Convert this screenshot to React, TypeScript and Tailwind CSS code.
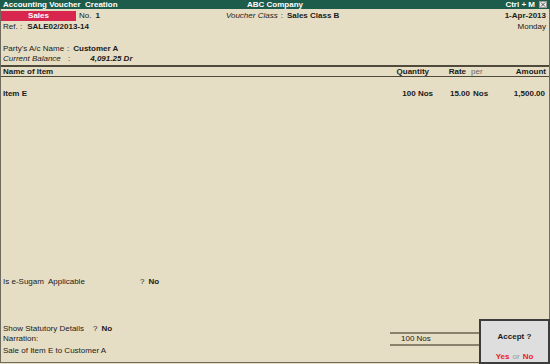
export default function App() {
  return (
    <div
      className="relative w-[550px] h-[364px] bg-[#e6dec4] text-[#1a1a1a] text-[8px] leading-[10px] flex flex-col overflow-hidden"
      style={{ fontFamily: '"Liberation Sans", Arial, sans-serif' }}
    >
      {/* Title bar */}
      <div className="h-[9px] bg-[#1d5b4b] text-white font-bold leading-[9px] grid grid-cols-3 px-[3px]">
        <span>Accounting Voucher&nbsp; Creation</span>
        <span className="text-center">ABC Company</span>
        <span className="flex justify-end items-center gap-[4px]">
          Ctrl + M
          <span className="w-[8px] h-[7px] bg-[#e8e8e8] border border-[#9a9a9a] flex items-center justify-center">
            <svg width="6" height="5" viewBox="0 0 6 5">
              <path d="M1 0.5 L5 4.5 M5 0.5 L1 4.5" stroke="#555" strokeWidth="1" />
            </svg>
          </span>
        </span>
      </div>

      {/* Body */}
      <div className="flex-1 flex flex-col border-l border-r border-b border-[#6e6a5c] mb-[1px]">
        {/* Voucher header */}
        <div className="mt-[2px] h-[10px] flex items-center">
          <div className="w-[75px] h-[10px] bg-[#d9264f] text-white font-bold text-center">Sales</div>
          <span className="ml-[3px]">No.</span>
          <span className="ml-[4px] font-bold">1</span>
          <span className="ml-[126px] italic">Voucher Class</span>
          <span className="ml-[3px]">:</span>
          <span className="ml-[4px] font-bold">Sales Class B</span>
          <span className="ml-auto mr-[3px] font-bold">1-Apr-2013</span>
        </div>
        <div className="mt-[1px] h-[10px] flex items-center px-[2px]">
          <span>Ref. :</span>
          <span className="ml-[5px] font-bold">SALE02/2013-14</span>
          <span className="ml-auto mr-[1px]">Monday</span>
        </div>

        {/* Party */}
        <div className="mt-[12px] h-[10px] flex items-center px-[2px]">
          <span className="w-[64px]">Party's A/c Name</span>
          <span>:</span>
          <span className="ml-[4px] font-bold">Customer A</span>
        </div>
        <div className="h-[10px] flex items-center px-[2px]">
          <span className="w-[65px] italic">Current Balance</span>
          <span>:</span>
          <span className="ml-[20px] font-bold italic">4,091.25 Dr</span>
        </div>

        {/* Table header */}
        <div className="mt-[1px] h-[12px] flex items-center border-t-2 border-b border-[#4f4a3c] font-bold">
          <span className="flex-1 pl-[2px]">Name of Item</span>
          <span className="w-[60px] text-right">Quantity</span>
          <span className="w-[37px] text-right">Rate</span>
          <span className="w-[15px] pl-[5px] font-normal text-[#666]">per</span>
          <span className="w-[68px] text-right pr-[3px]">Amount</span>
        </div>

        {/* Item row */}
        <div className="mt-[12px] h-[10px] flex items-center font-bold">
          <span className="flex-1 pl-[2px]">Item E</span>
          <span className="w-[64px] text-right">100 Nos</span>
          <span className="w-[37px] text-right">15.00</span>
          <span className="w-[15px] pl-[3px]">Nos</span>
          <span className="w-[64px] text-right pr-[4px]">1,500.00</span>
        </div>

        <div className="flex-1" />

        {/* e-Sugam */}
        <div className="h-[10px] flex items-center px-[2px]">
          <span className="w-[137px]">Is e-Sugam&nbsp; Applicable</span>
          <span>?</span>
          <span className="ml-[4px] font-bold">No</span>
        </div>

        {/* Bottom section */}
        <div className="mt-[37px] mb-[6px] flex items-start">
          <div className="flex flex-col px-[2px]">
            <div className="h-[10px] flex items-center">
              <span className="w-[90px]">Show Statutory Details</span>
              <span>?</span>
              <span className="ml-[4px] font-bold">No</span>
            </div>
            <div className="h-[10px] flex items-center">Narration:</div>
            <div className="mt-[2px] h-[10px] flex items-center">Sale of Item E to Customer A</div>
          </div>
          <div className="ml-auto mr-[70px] mt-[8px] w-[89px] h-[14px] border-t-2 border-b-2 border-[#8a826d] pl-[11px] flex items-center">
            100 Nos
          </div>
        </div>
      </div>

      {/* Accept popup */}
      <div className="absolute right-0 bottom-0 w-[71px] h-[45px] bg-[#dedede] border-2 border-[#3c3c3c] flex flex-col items-center">
        <span className="mt-[11px] font-bold">Accept ?</span>
        <span className="mt-[10px]">
          <span className="font-bold text-[#ec1c24]">Yes</span>
          <span className="text-[#999] mx-[3px]">or</span>
          <span className="font-bold text-[#ec1c24]">No</span>
        </span>
      </div>
    </div>
  )
}
